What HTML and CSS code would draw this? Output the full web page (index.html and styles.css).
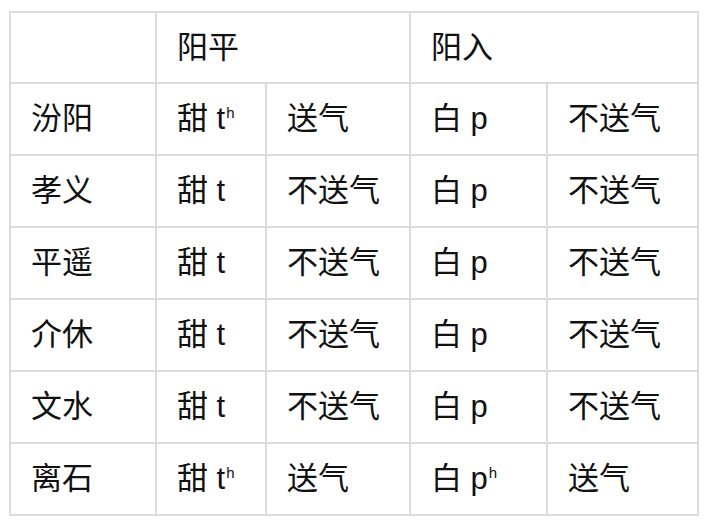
FILE: index.html
```html
<!DOCTYPE html>
<html lang="zh">
<head>
<meta charset="utf-8">
<title>声母送气对照</title>
<link rel="stylesheet" href="styles.css">
</head>
<body>
<table class="grid">
  <colgroup>
    <col class="c1"><col class="c2"><col class="c3"><col class="c4"><col class="c5">
  </colgroup>
  <tr>
    <td></td>
    <td colspan="2">阳平</td>
    <td colspan="2">阳入</td>
  </tr>
  <tr>
    <td>汾阳</td>
    <td>甜 t<span class="asp">h</span></td>
    <td>送气</td>
    <td>白 p</td>
    <td>不送气</td>
  </tr>
  <tr>
    <td>孝义</td>
    <td>甜 t</td>
    <td>不送气</td>
    <td>白 p</td>
    <td>不送气</td>
  </tr>
  <tr>
    <td>平遥</td>
    <td>甜 t</td>
    <td>不送气</td>
    <td>白 p</td>
    <td>不送气</td>
  </tr>
  <tr>
    <td>介休</td>
    <td>甜 t</td>
    <td>不送气</td>
    <td>白 p</td>
    <td>不送气</td>
  </tr>
  <tr>
    <td>文水</td>
    <td>甜 t</td>
    <td>不送气</td>
    <td>白 p</td>
    <td>不送气</td>
  </tr>
  <tr>
    <td>离石</td>
    <td>甜 t<span class="asp">h</span></td>
    <td>送气</td>
    <td>白 p<span class="asp">h</span></td>
    <td>送气</td>
  </tr>
</table>
</body>
</html>
```

FILE: styles.css
```css
html, body {
  margin: 0;
  padding: 0;
  background: #ffffff;
}

body {
  padding: 11px 0 0 9px;
  font-family: "Liberation Sans", "Noto Sans CJK SC", sans-serif;
  color: #111111;
}

.grid {
  border-collapse: separate;
  border-spacing: 0;
  table-layout: fixed;
  width: 690px;
  border-left: 2px solid #dcdcdc;
  border-top: 2px solid #dcdcdc;
}

.c1 { width: 146px; }
.c2 { width: 110px; }
.c3 { width: 144px; }
.c4 { width: 137px; }
.c5 { width: 151px; }

.grid td {
  box-sizing: border-box;
  height: 72px;
  padding: 0 0 0 20px;
  border-right: 2px solid #dcdcdc;
  border-bottom: 2px solid #dcdcdc;
  font-size: 31px;
  line-height: 36px;
  vertical-align: middle;
  white-space: nowrap;
}

.grid tr:first-child td {
  height: 71px;
}

.asp {
  font-size: 15px;
  vertical-align: 11px;
  line-height: 0;
  margin-left: 1px;
}
```
